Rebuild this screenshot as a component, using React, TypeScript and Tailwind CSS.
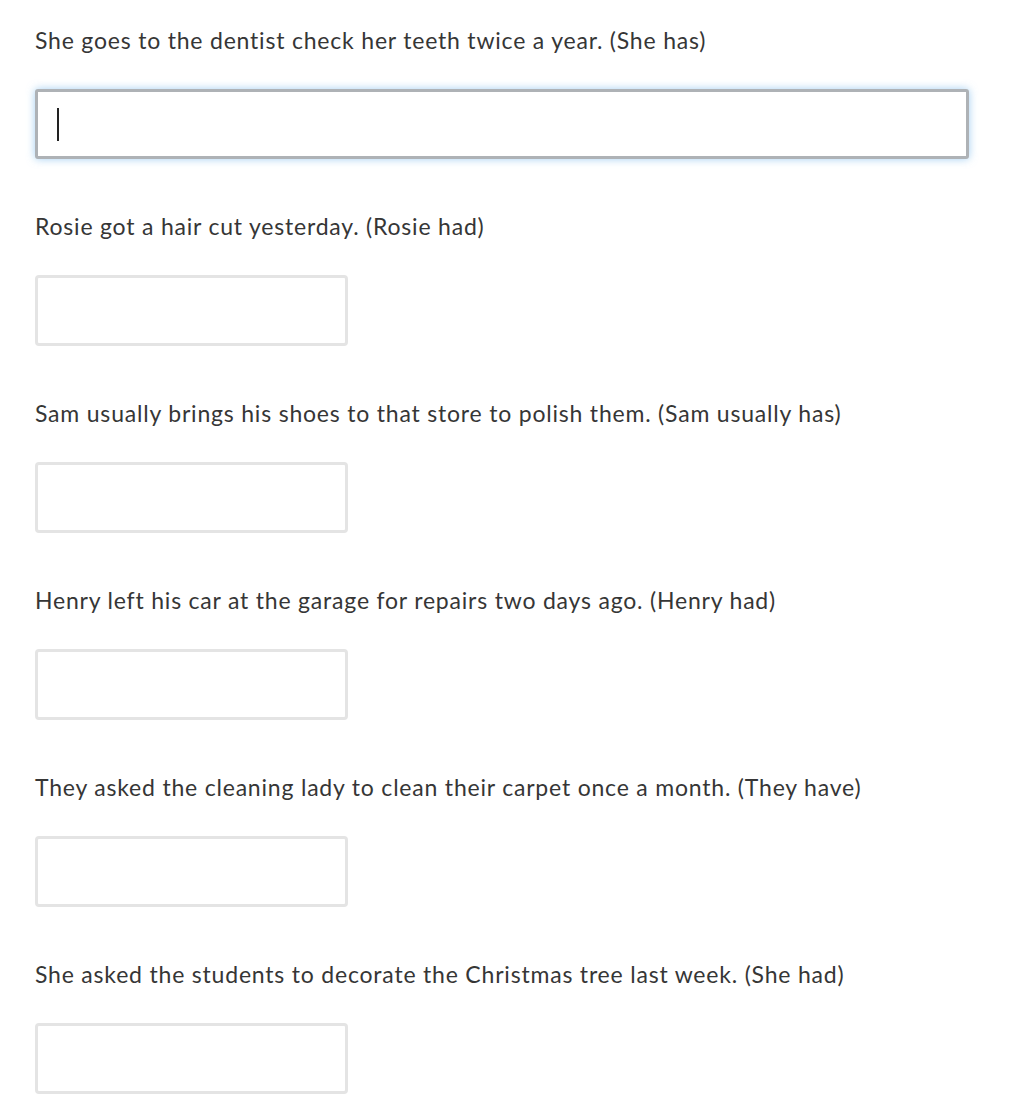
import React from 'react'

const questions = [
  'She goes to the dentist check her teeth twice a year. (She has)',
  'Rosie got a hair cut yesterday. (Rosie had)',
  'Sam usually brings his shoes to that store to polish them. (Sam usually has)',
  'Henry left his car at the garage for repairs two days ago. (Henry had)',
  'They asked the cleaning lady to clean their carpet once a month. (They have)',
  'She asked the students to decorate the Christmas tree last week. (She had)',
]

export default function App() {
  return (
    <section
      className="min-h-[1119px] bg-white pl-[35px] pt-[24px] text-[#363636]"
      style={{ fontFamily: 'Lato, "Open Sans", sans-serif' }}
    >
      {questions.map((q, i) => (
        <div key={i} className="mb-[51px]">
          <p className="text-[23px] leading-[33px] tracking-[0.8px]">{q}</p>
          {i === 0 ? (
            // first field is focused, with the caret showing
            <div className="relative mt-[32px] h-[70px] w-[934px] rounded-[3px] border-[3px] border-[#aeb2b6] bg-white shadow-[0_0_9px_rgba(102,175,233,0.6)]">
              <input className="h-full w-full bg-transparent outline-none" />
              <span className="absolute left-[19px] top-[16px] h-[33px] w-[2px] bg-[#222]" />
            </div>
          ) : (
            <input className="mt-[32px] block h-[71px] w-[313px] rounded-[4px] border-[3px] border-[#e4e4e4] bg-white outline-none" />
          )}
        </div>
      ))}
    </section>
  )
}
